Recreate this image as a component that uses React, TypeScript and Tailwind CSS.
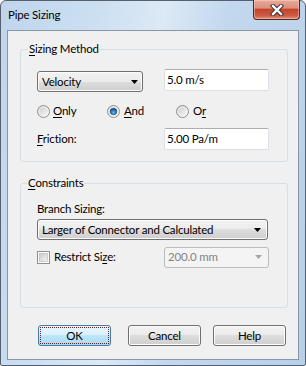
import React from 'react';

function Arrow({ color = '#000' }: { color?: string }) {
  return (
    <svg width="7" height="4" viewBox="0 0 7 4" className="shrink-0">
      <polygon points="0,0 7,0 3.5,4" fill={color} />
    </svg>
  );
}

function Radio({ checked }: { checked?: boolean }) {
  return (
    <svg width="13" height="13" viewBox="0 0 13 13" className="shrink-0">
      <defs>
        <linearGradient id="radioFill" x1="0" y1="0" x2="1" y2="1">
          <stop offset="0" stopColor="#c9cacb" />
          <stop offset="1" stopColor="#fbfbfb" />
        </linearGradient>
        <radialGradient id="radioDot" cx="0.5" cy="0.65" r="0.6">
          <stop offset="0" stopColor="#62c0f5" />
          <stop offset="1" stopColor="#0e3d73" />
        </radialGradient>
      </defs>
      <circle cx="6.5" cy="6.5" r="6" fill="url(#radioFill)" stroke="#8e8f8f" strokeWidth="1" />
      <circle cx="6.5" cy="6.5" r="4.6" fill="none" stroke="#f4f4f4" strokeWidth="0.8" />
      {checked && <circle cx="6.5" cy="6.5" r="3.3" fill="url(#radioDot)" stroke="#1d4f83" strokeWidth="0.6" />}
    </svg>
  );
}

function Checkbox() {
  return (
    <svg width="13" height="13" viewBox="0 0 13 13" className="shrink-0">
      <defs>
        <linearGradient id="checkFill" x1="0" y1="0" x2="1" y2="1">
          <stop offset="0" stopColor="#c6c9ce" />
          <stop offset="1" stopColor="#f6f6f6" />
        </linearGradient>
      </defs>
      <rect x="0.5" y="0.5" width="12" height="12" fill="#fdfdfd" stroke="#8e8f8f" />
      <rect x="2.5" y="2.5" width="8" height="8" fill="url(#checkFill)" stroke="#b1b4b8" strokeWidth="0.6" />
    </svg>
  );
}

function Combo({ text, width, padRight }: { text: string; width: string; padRight: string }) {
  return (
    <div
      className={`flex h-[21px] items-center justify-between rounded-[3px] border border-[#707070] bg-[linear-gradient(180deg,#f2f2f2_0%,#ebebeb_50%,#dddddd_50%,#cfcfcf_100%)] pl-[4px] shadow-[inset_0_0_0_1px_#fcfcfc] ${width} ${padRight}`}
    >
      <span className="leading-[16px]">{text}</span>
      <Arrow />
    </div>
  );
}

function TextBox({ value }: { value: string }) {
  return (
    <div className="h-[22px] w-[105px] rounded-[2px] border border-[#dbdfe6] border-t-[#abadb3] bg-white pl-[2px] leading-[20px]">
      {value}
    </div>
  );
}

function Button({ label }: { label: string }) {
  return (
    <div className="flex h-[21px] w-[73px] items-center justify-center rounded-[3px] border border-[#707070] bg-[linear-gradient(180deg,#f2f2f2_0%,#ebebeb_50%,#dddddd_50%,#cfcfcf_100%)] shadow-[inset_0_0_0_1px_#fcfcfc]">
      {label}
    </div>
  );
}

export default function App() {
  return (
    <div className="h-[366px] w-[306px] bg-white text-[11.5px] leading-[16px] tracking-[-0.2px] text-black [font-family:Lato,'Liberation_Sans',sans-serif]">
      <div className="flex h-full flex-col rounded-t-[6px] rounded-b-[2px] border border-[#55616f] bg-[linear-gradient(100deg,#bfd5ec_0%,#cde0f2_28%,#dce9f6_45%,#c3d8ee_62%,#b9d0e9_100%)]">
        {/* title bar */}
        <div className="flex h-[29px] items-start justify-between">
          <div className="pl-[7px] pt-[6px]">Pipe Sizing</div>
          <div className="-mt-[1px] mr-[5px] flex h-[20px] w-[47px] items-center justify-center rounded-b-[4px] border border-t-0 border-[#5e2318] bg-[linear-gradient(180deg,#e8aa9b_0%,#dc8f7d_42%,#c5442b_50%,#cc5a40_80%,#dd8f78_100%)] shadow-[inset_0_0_0_1px_rgba(255,220,210,0.45)]">
            <svg width="14" height="12" viewBox="0 0 14 12">
              <path d="M3 2 L11 10 M11 2 L3 10" stroke="#3a3030" strokeWidth="4.4" strokeLinecap="square" />
              <path d="M3 2 L11 10 M11 2 L3 10" stroke="#ffffff" strokeWidth="2.4" strokeLinecap="square" />
            </svg>
          </div>
        </div>

        {/* client area */}
        <div className="mx-[6px] flex h-[330px] flex-col border border-[#8896a6] bg-[#f0f0f0]">
          <fieldset className="ml-[12px] mt-[10px] w-[268px] rounded-[3px] border border-[#d5dfe5] px-[7px] pb-[11px]">
            <legend className="px-[1px] leading-[16px]">
              <span className="underline underline-offset-2">S</span>izing Method
            </legend>
            <div className="pl-[9px]">
              <div className="mt-[12px] flex h-[22px] items-start">
                <div className="mt-[2px]">
                  <Combo text="Velocity" width="w-[106px]" padRight="pr-[4px]" />
                </div>
                <div className="ml-[21px]">
                  <TextBox value="5.0 m/s" />
                </div>
              </div>
              <div className="mt-[12px] flex h-[16px] items-center">
                <div className="flex w-[70px] items-center gap-[3px]">
                  <Radio />
                  <span><span className="underline underline-offset-2">O</span>nly</span>
                </div>
                <div className="flex w-[69px] items-center gap-[4px]">
                  <Radio checked />
                  <span><span className="underline underline-offset-2">A</span>nd</span>
                </div>
                <div className="flex items-center gap-[4px]">
                  <Radio />
                  <span>O<span className="underline underline-offset-2">r</span></span>
                </div>
              </div>
              <div className="mt-[9px] flex h-[22px] items-center">
                <div className="w-[127px]">
                  <span className="underline underline-offset-2">F</span>riction:
                </div>
                <TextBox value="5.00 Pa/m" />
              </div>
            </div>
          </fieldset>

          <fieldset className="ml-[12px] mt-[13px] w-[268px] rounded-[3px] border border-[#d5dfe5] px-[7px] pb-[39px]">
            <legend className="-ml-[1px] px-[1px] leading-[16px]">
              <span className="underline underline-offset-2">C</span>onstraints
            </legend>
            <div className="pl-[9px]">
              <div className="mt-[10px]">Branch Sizing:</div>
              <div className="mt-[2px]">
                <Combo text="Larger of Connector and Calculated" width="w-[231px]" padRight="pr-[6px]" />
              </div>
              <div className="mt-[6px] flex h-[22px] items-center">
                <div className="flex w-[127px] items-center gap-[4px]">
                  <Checkbox />
                  <span>
                    Restrict Si<span className="underline underline-offset-2">z</span>e:
                  </span>
                </div>
                <div className="flex h-[21px] w-[105px] items-center justify-between rounded-[3px] border border-[#b8bdc1] bg-[#f4f4f4] pl-[3px] pr-[6px] text-[#838383]">
                  <span>200.0 mm</span>
                  <Arrow color="#a6a6a6" />
                </div>
              </div>
            </div>
          </fieldset>

          <div className="ml-[30px] mt-[17px] flex">
            <div className="h-[21px] w-[73px] rounded-[3px] border border-[#3c7fb1] bg-[linear-gradient(180deg,#eaf6fd_0%,#d9f0fc_50%,#bee6fd_50%,#a7d9f5_100%)] p-[1px]">
              <div className="flex h-full items-center justify-center border border-dotted border-[#6e2020]">OK</div>
            </div>
            <div className="ml-[17px]">
              <Button label="Cancel" />
            </div>
            <div className="ml-[12px]">
              <Button label="Help" />
            </div>
          </div>
        </div>
      </div>
    </div>
  );
}
